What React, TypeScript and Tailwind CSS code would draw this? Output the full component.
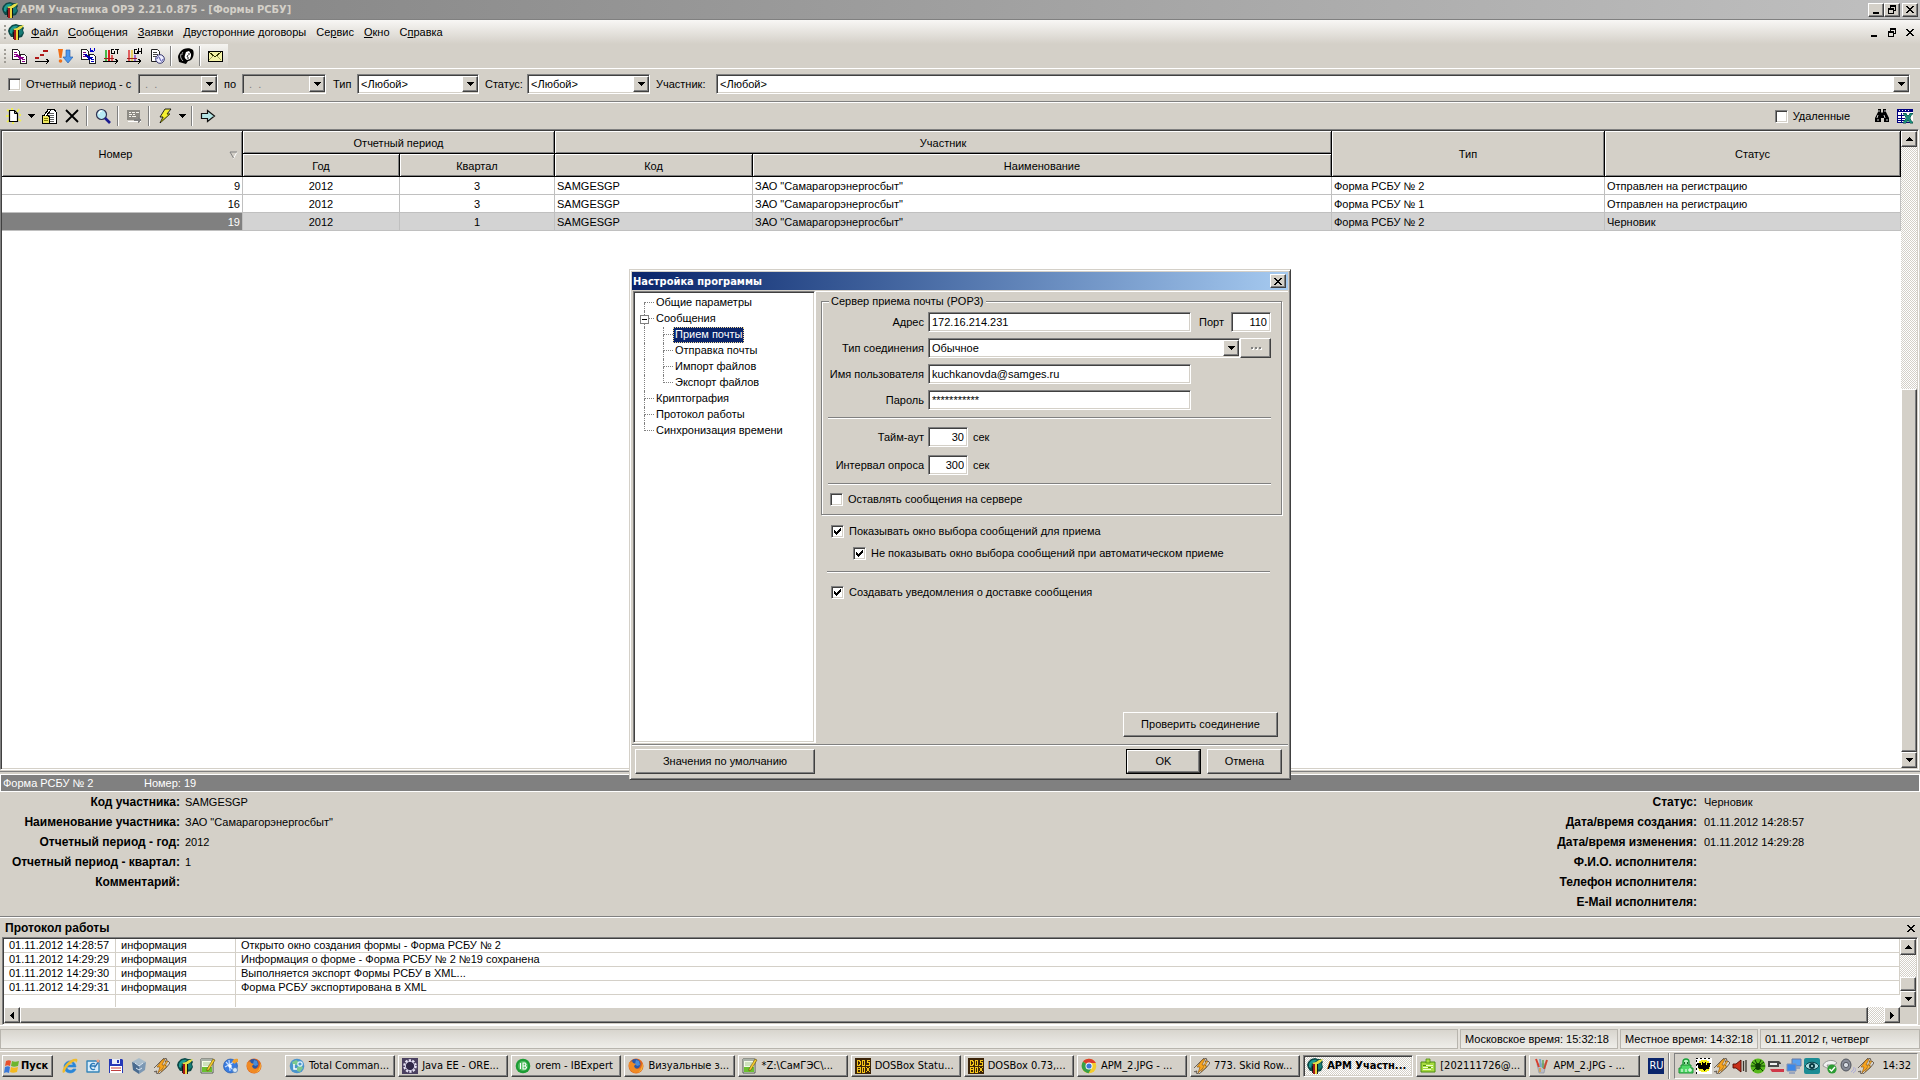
import type { ReactNode } from 'react';
import clsx from 'clsx';

const raised =
  'border border-t-white border-l-white border-r-[#404040] border-b-[#404040] shadow-[inset_-1px_-1px_0_#808080] bg-[#d4d0c8]';
const sunken =
  'border border-t-[#808080] border-l-[#808080] border-r-white border-b-white shadow-[inset_1px_1px_0_#404040,inset_-1px_-1px_0_#d4d0c8]';
const dither =
  'bg-[conic-gradient(#fff_25%,#d4d0c8_0_50%,#fff_0_75%,#d4d0c8_0)] bg-[length:2px_2px]';
const caption = "font-['DejaVu_Sans_Condensed','Noto_Sans',sans-serif] text-[11px] font-bold";

/* ---------- icons ---------- */

function Icon({ children, crisp = false }: { children: ReactNode; crisp?: boolean }) {
  return (
    <svg
      viewBox="0 0 16 16"
      className="h-4 w-4 shrink-0"
      fill="none"
      shapeRendering={crisp ? 'crispEdges' : 'auto'}
      aria-hidden="true"
    >
      {children}
    </svg>
  );
}

function Arrow({ dir }: { dir: 'up' | 'down' | 'left' | 'right' }) {
  const paths = {
    up: 'M3 0h1v1h1v1h1v1h1v1H0V3h1V2h1V1h1z',
    down: 'M0 0h7v1H6v1H5v1H4v1H3V3H2V2H1V1H0z',
    left: 'M0 3h1V2h1V1h1V0h1v7H3V6H2V5H1V4H0z',
    right: 'M0 0h1v1h1v1h1v1h1v1H3v1H2v1H1v1H0z',
  };
  const flat = dir === 'up' || dir === 'down';
  return (
    <svg
      viewBox={flat ? '0 0 7 4' : '0 0 4 7'}
      className={flat ? 'h-1 w-[7px] shrink-0' : 'h-[7px] w-1 shrink-0'}
      shapeRendering="crispEdges"
      aria-hidden="true"
    >
      <path d={paths[dir]} fill="#000" />
    </svg>
  );
}

const AppIcon = () => (
  <Icon>
    <path d="M1 4l3-3 4-1 3 1 3 0 2 3-1 2 1 3-2 4-4 1v2H6v-3L3 13 1 10 0 7z" fill="#0c4a48" />
    <path d="M2 6c1-4 5-5 8-4L7 5 5 5 4 10 2 9z" fill="#1d9a92" />
    <path d="M11 6l3-1 1 4-3 3-1-1z" fill="#167c76" />
    <path d="M5 5l4-1 3-2 4-1-2 3-3 2-3 1z" fill="#e6e04a" />
    <path d="M6 6h2v10H6z" fill="#a01818" />
    <path d="M8 6h2v10H8z" fill="#ecd43a" />
    <path d="M10.500 6v10M5.500 8v7" stroke="#111" strokeWidth=".9" />
  </Icon>
);

const DocsIcon = ({ letter }: { letter?: boolean }) => (
  <Icon crisp>
    <path d="M1 1h5l2 2v8H1z" fill="#fff" stroke="#202020" />
    <path d="M3 4h3M3 6h4M3 8h3" stroke="#800080" />
    <path d="M9 6h4l2 2v7H9z" fill="#fff" stroke="#202020" />
    <path d="M11 9h2M11 11h3M11 13h3" stroke={letter ? '#0000c0' : '#800080'} />
    <path d="M4 6h2l3 3V7l3 4-4 1v-1L5 8z" fill={letter ? '#0000b0' : '#900090'} />
    {letter && <path d="M10 0v3l1 1 1-2 1 2 1-1V0" stroke="#0000d0" />}
  </Icon>
);

const StepsIcon = () => (
  <Icon crisp>
    <path d="M9 2h5v2H9zM6 6h4v2H6zM1 9h4v2H1z" fill="#b01818" />
    <path d="M1 13h13M12 11l3 2-3 3" stroke="#000" />
  </Icon>
);

const ExchangeIcon = () => (
  <Icon>
    <path d="M1 1h5L4.500 10h-2z" fill="#f07018" />
    <circle cx="3.500" cy="13" r="1.800" fill="#f07018" />
    <path d="M9 2h4v7h3l-5 6-5-6h3z" fill="#4c98ec" stroke="#1c55a8" strokeWidth=".6" />
  </Icon>
);

const BarsIcon = ({ second }: { second?: boolean }) => (
  <Icon crisp>
    <path d="M2 2h2v11H2z" fill={second ? '#e06060' : '#48b848'} />
    <path d="M5 2h2v11H5z" fill={second ? '#e8d060' : '#d82020'} />
    <path d="M8 7h2v6H8z" fill={second ? '#a070d0' : '#e06060'} />
    <path d="M1 10h10" stroke="#a02020" />
    <path d="M0 13h14M12 11l3 2-3 3" stroke="#000" />
    {second ? (
      <path d="M11 1H8v4h3V3M12 0v6M15 0v6M12 3h3" stroke="#000" />
    ) : (
      <path d="M11 1H8v4h3V3M12 1h4M14 1v5" stroke="#000" />
    )}
  </Icon>
);

const DocWaveIcon = () => (
  <Icon>
    <path d="M2.500 1.500h6l2 2v10h-8z" fill="#fff" stroke="#202020" />
    <path d="M4 4.500h4M4 6.500h5M4 8.500h3" stroke="#303030" strokeWidth=".9" />
    <circle cx="11" cy="11" r="4.300" fill="#eef" stroke="#202060" strokeWidth=".9" />
    <path d="M8 11c1-3 2-3 3 0s2 3 3 0" stroke="#4040a0" strokeWidth=".9" />
  </Icon>
);

const HeadIcon = () => (
  <Icon>
    <path d="M3 3c2-3 9-4 12-1 1 2 1 6-1 9-2 2-4 2-4 2l-2 3-7-2-1-5C0 7 2 4 3 3z" fill="#000" />
    <path d="M8 4l3-1 2 3 0 2-1 3-3 1C7 11 6 9 7 7z" fill="#fff" />
    <path d="M10 6h2M9 10h2M10 7l-1 2" stroke="#000" strokeWidth=".9" />
    <path d="M3 6c-1 3 0 5 2 7M5 4c-1 1-1 2-1 3" stroke="#ddd" strokeWidth=".8" />
  </Icon>
);

const MailIcon = () => (
  <Icon crisp>
    <path d="M1 3h14v10H1z" fill="#f4f2a8" stroke="#000" />
    <path d="M1 13h14v1H1z" fill="#000" />
    <path d="M2 4l6 5 6-5" stroke="#303000" />
    <path d="M2 12l4-4M14 12l-4-4" stroke="#a0a060" />
  </Icon>
);

const NewIcon = () => (
  <Icon>
    <path d="M1 2l3 1M13 1l-2 3M1 14l3-2M15 13l-3-2M15 7h-2M0 8h3M6 0v2M7 16v-2" stroke="#eeee58" strokeWidth="2" />
    <path d="M3.500 2.500h5l3 3v8h-8z" fill="#fff" stroke="#000" strokeWidth="1.200" />
    <path d="M8.500 2.500v3h3" stroke="#000" />
  </Icon>
);

const EditIcon = () => (
  <Icon crisp>
    <path d="M6 1h7l2 3v11H6z" fill="#fff" stroke="#000" />
    <path d="M8 5h5M8 7h5M9 9h4M9 11h4M9 13h4" stroke="#606060" />
    <path d="M1 7h5l3 2-1 6H1z" fill="#f0e860" stroke="#000" />
    <path d="M3 7l5-6 2 1-5 6" fill="#fff" stroke="#000" />
    <path d="M3 10h4M3 12h4" stroke="#808000" />
  </Icon>
);

const DeleteIcon = () => (
  <Icon>
    <path d="M2 2l12 12M14 2L2 14" stroke="#000" strokeWidth="1.800" />
  </Icon>
);

const SearchIcon = () => (
  <Icon>
    <circle cx="6.500" cy="6.500" r="5" fill="#b8eaf4" stroke="#303050" strokeWidth="1.200" />
    <path d="M4 6c0-2 1-3 3-3" stroke="#fff" strokeWidth="1.200" />
    <path d="M10 10l5 5" stroke="#1c1c90" strokeWidth="2.600" />
  </Icon>
);

const SendOffIcon = () => (
  <Icon crisp>
    <path d="M1 2h13v10H1z" fill="#8c8a84" />
    <path d="M3 4h2M6 4h3M10 4h3M3 6h3M7 6h2M3 8h2M6 8h4" stroke="#f4f2ec" />
    <path d="M15 4v9H2v1h13z" fill="#fff" />
    <path d="M8 11h4V9l4 3-4 3v-2H8z" fill="#808080" />
  </Icon>
);

const BoltIcon = () => (
  <Icon>
    <path d="M8 1h6l-4 5h3L3 15l3-6H3z" fill="#f4f030" stroke="#101010" strokeWidth=".9" />
    <path d="M10 6l3 0L4 14l3-5" stroke="#808000" strokeWidth=".6" />
  </Icon>
);

const GoIcon = () => (
  <Icon>
    <path d="M1.500 5.500h6v-3l7 5.500-7 5.500v-3h-6z" fill="#b4e4e4" stroke="#101010" strokeWidth="1.200" />
  </Icon>
);

const BinocularsIcon = () => (
  <Icon>
    <path d="M4 1h3v3l1 1 1-1V1h3v3l3 6v4h-5v-4H7v4H1v-4l3-6z" fill="#000" />
    <path d="M5 2v2M11 2v2M3 10l1-3M10 7l1 3M3 12h2M12 12h2" stroke="#fff" strokeWidth=".8" />
  </Icon>
);

const ExcelIcon = () => (
  <Icon crisp>
    <path d="M0 1h16v13H0z" fill="#fff" stroke="#000080" />
    <path d="M0 1h16v3H0z" fill="#000080" />
    <path d="M2 2h1M5 2h1M8 2h1M11 2h1" stroke="#fff" />
    <path d="M1 7h7M1 10h7M1 12h7M4 5v9" stroke="#000080" />
    <path d="M6 5h3l2 3 2-3h3l-3 5 3 5h-3l-2-3-2 3H6l3-5z" fill="#1a8c78" stroke="#06443a" strokeWidth=".5" />
  </Icon>
);

const StartIcon = () => (
  <Icon>
    <path d="M2 3c2-1 4-1 5 0L6 8C4 7 3 7 1 8z" fill="#e8502c" />
    <path d="M8 3c2 1 4 1 7 0l-1 5c-3 1-5 1-7 0z" fill="#6cb52d" />
    <path d="M1 9c2-1 4-1 5 0l-1 6c-2-1-3-1-5 0z" fill="#3a78d8" />
    <path d="M7 9c2 1 4 1 7 0l-1 5c-3 1-5 1-7 0z" fill="#f4b91e" />
  </Icon>
);

const IeIcon = () => (
  <Icon>
    <path d="M14 9H5c0 4 5 4 6 2h3c-2 6-12 5-12-2S13 0 14 9zM5 7h6c0-3-5-3-6 0z" fill="#2a86d8" stroke="#2a86d8" strokeWidth=".6" />
    <path d="M1 15C-2 11 9-1 15 1c1 1 0 3-1 4 0-2-1-2-3-1C7 6 3 11 3 14z" fill="#f0bc2c" />
  </Icon>
);

const DesktopIcon = () => (
  <Icon>
    <path d="M2 3h9l3 2v9H2z" fill="#d8ecfa" stroke="#3584b8" strokeWidth="1.400" strokeLinejoin="round" />
    <path d="M10 6a3 3 0 1 0 0 5M6 8h4" stroke="#2a7ab8" strokeWidth="1.300" />
    <path d="M9 9l5-7 1 1-5 7z" fill="#2a70b0" />
    <circle cx="13" cy="3" r="1.500" fill="#f0a080" />
  </Icon>
);

const FloppyIcon = () => (
  <Icon>
    <path d="M1 1h13l1 1v13H1z" fill="#2438b8" />
    <path d="M4 1h8v5H4z" fill="#e8ecf8" />
    <path d="M9 2h2v3H9z" fill="#2438b8" />
    <path d="M2 8h12v7H2z" fill="#fff" />
    <path d="M3 10h10M3 12.500h10" stroke="#c04040" />
  </Icon>
);

const CubeIcon = () => (
  <Icon>
    <path d="M8 0l7 4-7 3-7-3z" fill="#a8bccb" />
    <path d="M1 4l7 3v9l-6-4z" fill="#4a6c90" />
    <path d="M15 4L8 7v9l6-4z" fill="#7c98b4" />
    <path d="M4 5l4 3 4-3M5 10l3 2 3-2" stroke="#dce8f4" />
  </Icon>
);

const WinampIcon = () => (
  <Icon>
    <path d="M7 3l3-3 3 1-2 3 3-1 2 2-4 5-7 6-3-1 1-2-4 1-1-2 5-5z" fill="#d8d4cc" stroke="#4c443c" strokeWidth=".8" />
    <path d="M8 2l3-1-3 6h4l-8 8 2-6H3z" fill="#f8a41c" stroke="#8c5408" strokeWidth=".6" />
    <path d="M12 3l2 0-3 5h2l-6 6 2-4z" fill="#fbb83c" stroke="#8c5408" strokeWidth=".5" />
  </Icon>
);

const NotepadIcon = () => (
  <Icon>
    <path d="M1 1h12v14H1z" fill="#f4fbe8" stroke="#505850" />
    <path d="M1 1h12v2H1z" fill="#a8b0a8" />
    <path d="M2 9h10v5H2z" fill="#6cc030" />
    <path d="M3 5h7M3 7h6" stroke="#a8c890" />
    <path d="M7 11l6-10 2 1-6 10-2 1z" fill="#f4cc2c" stroke="#604808" strokeWidth=".6" />
  </Icon>
);

const DiscIcon = () => (
  <Icon>
    <circle cx="7.500" cy="8" r="7" fill="#3a7ce0" stroke="#2050a0" strokeWidth=".6" />
    <path d="M3 4l8 9M2 9l9-5M6 2l1 11" stroke="#c8e0ff" strokeWidth="1.200" />
    <circle cx="7" cy="8" r="1.800" fill="#fff" />
    <path d="M9 4c1-3 4-4 6-3v3c-2 0-3 1-3 2z" fill="#f0a02c" />
    <circle cx="12" cy="12" r="2.500" fill="#d8e8f8" stroke="#4878b8" strokeWidth=".8" />
  </Icon>
);

const FirefoxIcon = () => (
  <Icon>
    <circle cx="8" cy="8" r="7.500" fill="#e0631c" />
    <circle cx="7.500" cy="6" r="5" fill="#2a58a8" />
    <path d="M8 2l3 1 1 4-3 1-2-2z" fill="#4c8cd8" />
    <path d="M1 4c1 1 2 0 3-1l1 2 3 1-2 2c1 4 6 4 8 0 0 4-3 7-7 7C2 14 0 9 1 4z" fill="#f08a24" />
    <path d="M14 5c2 4 0 9-5 10 4-2 5-5 5-10z" fill="#f8c040" />
  </Icon>
);

const TotalIcon = () => (
  <Icon>
    <circle cx="8" cy="8" r="7.300" fill="#4a94cc" />
    <path d="M3 4l4-2 3 2-2 3H4zM8 9l4-2 2 3-3 4-3-1z" fill="#7cc890" />
    <path d="M5 6v5h3" stroke="#fff" strokeWidth="1.500" />
    <circle cx="11" cy="6" r="2.200" stroke="#e0f2ff" strokeWidth="1.200" />
  </Icon>
);

const EclipseIcon = () => (
  <Icon>
    <path d="M0 0h16v16H0z" fill="#4a4060" />
    <circle cx="8" cy="8" r="5.600" stroke="#e8e4f4" strokeWidth="2.400" strokeDasharray="2.200 1.300" />
    <circle cx="8" cy="8" r="4.600" fill="#302848" stroke="#d4d0e8" />
  </Icon>
);

const IbIcon = () => (
  <Icon>
    <circle cx="8" cy="8" r="7.300" fill="#1c9c34" />
    <circle cx="8" cy="8" r="5" fill="#50bc60" />
    <path d="M5.500 5v6M8 5v6h2.500l1-1.500-1-1.500H8h2l1-1.500-1-1.500z" stroke="#fff" strokeWidth="1.100" />
  </Icon>
);

const DosIcon = () => (
  <Icon crisp>
    <path d="M0 0h16v16H0z" fill="#3c2408" />
    <path
      d="M2 2h2v1h1v3H4v1H2zM7 2h2v5H7zM12 2h3M12 2v2h2v3h-3M2 9h3v5H2zM2 11h3M7 9h2v5H7zM11 9l4 5M15 9l-4 5"
      stroke="#f4c418"
    />
  </Icon>
);

const ChromeIcon = () => (
  <Icon>
    <circle cx="8" cy="8" r="7.300" fill="#f4cc2c" />
    <path d="M8 8L2 3.500C5-.5 12-.5 15 5H8z" fill="#dc3c2c" />
    <path d="M2 3.500C-1 8 1 14 7.500 15.300L11 9.500 8 8z" fill="#38a048" />
    <circle cx="8" cy="8" r="3.500" fill="#fff" />
    <circle cx="8" cy="8" r="2.600" fill="#3c78d8" />
  </Icon>
);

const NoteIcon = () => (
  <Icon>
    <path d="M1 4h14v10H1z" fill="#a8dc40" stroke="#4c8c10" />
    <path d="M3 7.500h10M3 9.500h10M3 11.500h8" stroke="#f0ffd0" />
    <path d="M3 7.500h3M8 9.500h3" stroke="#4c8c10" />
    <path d="M6 1h4v4H6z" fill="#a8dc40" stroke="#4c8c10" strokeWidth=".8" />
  </Icon>
);

const PencilsIcon = () => (
  <Icon>
    <path d="M4 6h9l-2 9H6z" fill="#b8bcc8" stroke="#888c98" strokeWidth=".6" />
    <path d="M3 1l3 8" stroke="#d83c2c" strokeWidth="2" />
    <path d="M7 1l1 8" stroke="#78a8c8" strokeWidth="2" />
    <path d="M14 2l-3 9" stroke="#c84830" strokeWidth="2" />
    <path d="M10 2v8" stroke="#5ca050" strokeWidth="1.400" />
    <path d="M7 10v4" stroke="#d8a040" strokeWidth="1.600" />
  </Icon>
);

const QipIcon = () => (
  <Icon>
    <path d="M5 8V4c0-4 6-4 6 0v4" fill="#b8f4c0" stroke="#18a038" strokeWidth="1.400" />
    <path d="M3 7h10v3h2v5H1v-5h2z" fill="#50d868" stroke="#189030" />
    <path d="M6.500 4v2M9.500 4v2" stroke="#106820" strokeWidth="1.200" />
    <path d="M4 11v3M8 11v3M11 11h2v2h-2z" stroke="#fff" />
  </Icon>
);

const BatIcon = () => (
  <Icon crisp>
    <path d="M0 0h16v16H0z" fill="#fff" stroke="#000" strokeDasharray="2 2" />
    <circle cx="8" cy="8" r="6.500" fill="#f4f01c" />
    <path d="M1 5h4v2h1V4h1v1h2V4h1v3h1V5h4l-2 6h-3l-2 2-2-2H3z" fill="#000" />
  </Icon>
);

const SpeakerIcon = () => (
  <Icon>
    <path d="M1 6h3l5-4v12l-5-4H1z" fill="#c83018" stroke="#500c04" strokeWidth=".9" />
    <path d="M11.500 3v10M14 2v12" stroke="#38342c" strokeWidth="1.300" />
  </Icon>
);

const SpiderIcon = () => (
  <Icon>
    <circle cx="8" cy="8" r="7.500" fill="#58b81c" />
    <path d="M2 4l4 3M14 4l-4 3M1 8h14M3 13l4-4M13 13L9 9M5 2l2 4M11 2L9 6" stroke="#0c3c04" />
    <ellipse cx="8" cy="8.500" rx="2.600" ry="3.600" fill="#0c3c04" />
  </Icon>
);

const DriveIcon = () => (
  <Icon>
    <path d="M0 3h11l2 2v4H0z" fill="#484848" />
    <path d="M2 5h7v2H2z" fill="#f0f0f0" />
    <path d="M2 11h14v3H4z" fill="#d03848" />
    <path d="M11 6h5v3h-5z" fill="#c8c8c8" />
  </Icon>
);

const NetworkIcon = () => (
  <Icon>
    <path d="M6 1h9v7H6z" fill="#58a0f0" stroke="#6878a0" />
    <path d="M1 6h9v7H1z" fill="#3c88e8" stroke="#8090b0" />
    <path d="M3 15h6M10 10h4" stroke="#8898b8" strokeWidth="1.400" />
  </Icon>
);

const EyeIcon = () => (
  <Icon>
    <rect width="16" height="16" rx="2" fill="#1c8c94" />
    <path d="M1 8c3-5 11-5 14 0-3 5-11 5-14 0z" fill="#a8dce0" stroke="#084048" />
    <circle cx="8" cy="8" r="3" fill="#083840" />
    <circle cx="8" cy="8" r="1" fill="#c8f0f0" />
  </Icon>
);

const SafeIcon = () => (
  <Icon>
    <path d="M1 8c0-5 10-8 14-3l-3 2H5l2 4z" fill="#f0f0f0" stroke="#888" strokeWidth=".8" />
    <circle cx="10" cy="11" r="4.600" fill="#2c9c34" />
    <path d="M7.500 11l2 2 3.500-4" stroke="#fff" strokeWidth="1.400" />
  </Icon>
);

const VolumeIcon = () => (
  <Icon>
    <ellipse cx="6" cy="7" rx="5" ry="6" fill="#888c98" stroke="#50545c" />
    <circle cx="6" cy="7" r="2.600" fill="#d8dce4" stroke="#40444c" strokeWidth=".8" />
    <path d="M11 14c2-1 3-3 3-5M13 15c2-1 3-3 3-5" stroke="#a8a8d8" />
  </Icon>
);

/* ---------- controls ---------- */

function MinGlyph() {
  return (
    <svg viewBox="0 0 9 9" className="h-[9px] w-[9px]" shapeRendering="crispEdges" aria-hidden="true">
      <path d="M1 7h6v2H1z" />
    </svg>
  );
}

function RestoreGlyph() {
  return (
    <svg viewBox="0 0 9 9" className="h-[9px] w-[9px]" shapeRendering="crispEdges" aria-hidden="true">
      <path d="M2 0h6v6H6V5h1V2H3v1H2zM0 3h6v6H0zm1 2v3h4V5z" fillRule="evenodd" />
    </svg>
  );
}

function CloseGlyph() {
  return (
    <svg viewBox="0 0 8 7" className="h-[7px] w-2" shapeRendering="crispEdges" aria-hidden="true">
      <path d="M0 0h2v1h1v1h2V1h1V0h2v1H7v1H6v1H5v1h1v1h1v1h1v1H6V6H5V5H3v1H2v1H0V6h1V5h1V4h1V3H2V2H1V1H0z" />
    </svg>
  );
}

function WinButton({ label, children }: { label: string; children: ReactNode }) {
  return (
    <button type="button" aria-label={label} className={clsx(raised, 'flex h-3.5 w-4 items-center justify-center')}>
      {children}
    </button>
  );
}

function ScrollButton({ dir }: { dir: 'up' | 'down' | 'left' | 'right' }) {
  return (
    <button
      type="button"
      aria-label={dir}
      className={clsx(raised, 'flex h-4 w-4 shrink-0 items-center justify-center')}
    >
      <Arrow dir={dir} />
    </button>
  );
}

function Check({ label, checked = false, className }: { label: string; checked?: boolean; className?: string }) {
  return (
    <label className={clsx('flex items-center gap-[5px] whitespace-nowrap', className)}>
      <span className="grid h-[13px] w-[13px] shrink-0">
        <input
          type="checkbox"
          defaultChecked={checked}
          className={clsx(sunken, 'peer col-start-1 row-start-1 h-[13px] w-[13px] appearance-none bg-white')}
        />
        <svg
          viewBox="0 0 13 13"
          className="pointer-events-none invisible col-start-1 row-start-1 h-[13px] w-[13px] peer-checked:visible"
          shapeRendering="crispEdges"
          aria-hidden="true"
        >
          <path d="M3 5h1v1h1v1h1V6h1V5h1V4h1V3h1v3H9v1H8v1H7v1H6v1H5V9H4V8H3z" />
        </svg>
      </span>
      {label}
    </label>
  );
}

function Combo({
  id,
  value,
  label,
  disabled = false,
  className,
}: {
  id: string;
  value: string;
  label?: string;
  disabled?: boolean;
  className?: string;
}) {
  return (
    <span className={clsx(sunken, 'relative flex h-5', disabled ? 'bg-[#d4d0c8]' : 'bg-white', className)}>
      <select
        id={id}
        aria-label={label}
        disabled={disabled}
        className="w-full appearance-none pl-[3px] outline-none disabled:text-[#808080] disabled:opacity-100"
      >
        <option>{value}</option>
      </select>
      <span
        className={clsx(
          raised,
          'pointer-events-none absolute top-px right-0 bottom-px flex w-4 items-center justify-center'
        )}
      >
        <Arrow dir="down" />
      </span>
    </span>
  );
}

const Grip = () => (
  <span className="ml-1 flex w-0.5 flex-col gap-0.5" aria-hidden="true">
    {[0, 1, 2, 3].map((i) => (
      <span key={i} className="h-0.5 w-0.5 bg-[#a09d96]" />
    ))}
  </span>
);

const Sep = ({ wide }: { wide?: boolean }) => (
  <span className={clsx('h-5 w-0.5 border-r border-l border-r-white border-l-[#808080]', wide ? 'mx-[3px]' : 'mx-0.5')} />
);

function ToolButton({ label, children }: { label: string; children: ReactNode }) {
  return (
    <button type="button" aria-label={label} className="flex h-[22px] w-[23px] items-center justify-center">
      {children}
    </button>
  );
}

/* ---------- main window ---------- */

const menu = [
  ['', 'Ф', 'айл'],
  ['', 'С', 'ообщения'],
  ['', 'З', 'аявки'],
  ['', 'Д', 'вусторонние договоры'],
  ['Се', 'р', 'вис'],
  ['', 'О', 'кно'],
  ['С', 'п', 'равка'],
];

const forms = [
  { num: 9, year: 2012, quarter: 3, type: 'Форма РСБУ № 2', status: 'Отправлен на регистрацию' },
  { num: 16, year: 2012, quarter: 3, type: 'Форма РСБУ № 1', status: 'Отправлен на регистрацию' },
  { num: 19, year: 2012, quarter: 1, type: 'Форма РСБУ № 2', status: 'Черновик', selected: true },
];

const log = [
  ['01.11.2012 14:28:57', 'Открыто окно создания формы - Форма РСБУ № 2'],
  ['01.11.2012 14:29:29', 'Информация о форме - Форма РСБУ № 2 №19 сохранена'],
  ['01.11.2012 14:29:30', 'Выполняется экспорт Формы РСБУ в XML...'],
  ['01.11.2012 14:29:31', 'Форма РСБУ экспортирована в XML'],
];

function TitleBar() {
  return (
    <header className="flex h-5 items-center gap-0.5 border-b border-[#808080] bg-linear-to-r from-[#808080] to-[#c0c0c0] pr-0.5 pl-0.5">
      <AppIcon />
      <h1 className={clsx(caption, 'flex-1 text-[#d4d0c8]')}>АРМ Участника ОРЭ 2.21.0.875 - [Формы РСБУ]</h1>
      <span className="flex">
        <WinButton label="Свернуть">
          <MinGlyph />
        </WinButton>
        <WinButton label="Восстановить">
          <RestoreGlyph />
        </WinButton>
        <span className="ml-0.5 flex">
          <WinButton label="Закрыть">
            <CloseGlyph />
          </WinButton>
        </span>
      </span>
    </header>
  );
}

function MenuBar() {
  return (
    <nav className="flex h-6 items-center bg-linear-to-b from-[#f8f7f5] to-[#d4d0c8]">
      <Grip />
      <span className="ml-0.5 flex">
        <AppIcon />
      </span>
      <span className="ml-0.5 flex flex-1">
        {menu.map(([before, key, after]) => (
          <button key={before + key + after} type="button" className="px-[5px]">
            {before}
            <u className="underline-offset-1">{key}</u>
            {after}
          </button>
        ))}
      </span>
      <span className="flex w-[50px] items-center justify-between pr-1.5">
        <button type="button" aria-label="Свернуть форму">
          <MinGlyph />
        </button>
        <button type="button" aria-label="Восстановить форму">
          <RestoreGlyph />
        </button>
        <button type="button" aria-label="Закрыть форму">
          <CloseGlyph />
        </button>
      </span>
    </nav>
  );
}

function MainToolbar() {
  return (
    <div className="flex h-[25px] border-b border-white">
      <div className="flex items-center bg-linear-to-b from-[#f5f4f1] to-[#d4d0c8] pr-0.5">
        <Grip />
        <span className="ml-px flex items-center">
          <ToolButton label="Акты">
            <DocsIcon />
          </ToolButton>
          <ToolButton label="Ступени">
            <StepsIcon />
          </ToolButton>
          <ToolButton label="Обмен">
            <ExchangeIcon />
          </ToolButton>
          <ToolButton label="Договоры">
            <DocsIcon letter />
          </ToolButton>
          <ToolButton label="График ГТ">
            <BarsIcon />
          </ToolButton>
          <ToolButton label="График ГН">
            <BarsIcon second />
          </ToolButton>
          <ToolButton label="Отчет">
            <DocWaveIcon />
          </ToolButton>
          <Sep />
          <ToolButton label="Персоны">
            <HeadIcon />
          </ToolButton>
          <Sep />
          <ToolButton label="Почта">
            <MailIcon />
          </ToolButton>
        </span>
      </div>
    </div>
  );
}

function FilterBar() {
  return (
    <div className="flex h-[33px] items-center border-b border-[#808080] pr-2.5 pb-0.5 pl-2">
      <Check label="Отчетный период - с" className="w-[130px]" />
      <Combo id="from" label="Период с" value={'\u00a0.\u00a0\u00a0.'} disabled className="w-20" />
      <label htmlFor="to" className="w-6 pl-1.5">
        по
      </label>
      <Combo id="to" label="Период по" value={'\u00a0.\u00a0\u00a0.'} disabled className="w-[84px]" />
      <label htmlFor="kind" className="w-[31px] pl-[7px]">
        Тип
      </label>
      <Combo id="kind" value="<Любой>" className="w-[122px]" />
      <label htmlFor="status" className="w-12 pl-1.5">
        Статус:
      </label>
      <Combo id="status" value="<Любой>" className="w-[123px]" />
      <label htmlFor="member" className="w-[66px] pl-1.5">
        Участник:
      </label>
      <Combo id="member" value="<Любой>" className="flex-1" />
    </div>
  );
}

function FormToolbar() {
  return (
    <div className="flex h-[27px] items-center border-t border-white pr-1 pl-0.5">
      <ToolButton label="Создать">
        <NewIcon />
      </ToolButton>
      <button type="button" aria-label="Создать, меню" className="flex w-3 justify-center">
        <Arrow dir="down" />
      </button>
      <ToolButton label="Изменить">
        <EditIcon />
      </ToolButton>
      <ToolButton label="Удалить">
        <DeleteIcon />
      </ToolButton>
      <Sep wide />
      <ToolButton label="Просмотр">
        <SearchIcon />
      </ToolButton>
      <Sep wide />
      <ToolButton label="Отправить">
        <SendOffIcon />
      </ToolButton>
      <Sep wide />
      <ToolButton label="Действия">
        <BoltIcon />
      </ToolButton>
      <button type="button" aria-label="Действия, меню" className="flex w-3 justify-center">
        <Arrow dir="down" />
      </button>
      <Sep wide />
      <ToolButton label="Перейти">
        <GoIcon />
      </ToolButton>
      <span className="flex-1" />
      <Check label="Удаленные" className="mr-5" />
      <ToolButton label="Найти">
        <BinocularsIcon />
      </ToolButton>
      <ToolButton label="Выгрузить в Excel">
        <ExcelIcon />
      </ToolButton>
    </div>
  );
}

const th =
  'border-r border-b border-black bg-[#d4d0c8] px-0 pt-0.5 pb-0 text-center font-normal shadow-[inset_1px_1px_0_#fff,inset_-1px_-1px_0_#808080]';
const td = 'border-r border-b border-[#c0c0c0] px-0.5 pt-px pb-0';

function FormsGrid() {
  return (
    <section className={clsx(sunken, 'mr-px flex min-h-0 flex-1 bg-white p-px')}>
      <div className="min-w-0 flex-1">
        <table className="w-full table-fixed border-separate border-spacing-0">
          <colgroup>
            <col className="w-[241px]" />
            <col className="w-[157px]" />
            <col className="w-[155px]" />
            <col className="w-[198px]" />
            <col />
            <col className="w-[273px]" />
            <col className="w-[296px]" />
          </colgroup>
          <thead>
            <tr className="h-[23px]">
              <th rowSpan={2} className={th}>
                <span className="flex items-center pr-1">
                  <span className="flex-1">Номер</span>
                  <svg viewBox="0 0 9 8" className="h-2 w-[9px]" fill="none" aria-hidden="true">
                    <path d="M8 1L4.500 7.500" stroke="#fff" />
                    <path d="M4.500 7L1 1h7" stroke="#808080" />
                  </svg>
                </span>
              </th>
              <th colSpan={2} className={th}>
                Отчетный период
              </th>
              <th colSpan={2} className={th}>
                Участник
              </th>
              <th rowSpan={2} className={th}>
                Тип
              </th>
              <th rowSpan={2} className={th}>
                Статус
              </th>
            </tr>
            <tr className="h-[23px]">
              <th className={th}>Год</th>
              <th className={th}>Квартал</th>
              <th className={th}>Код</th>
              <th className={th}>Наименование</th>
            </tr>
          </thead>
          <tbody>
            {forms.map((f) => (
              <tr key={f.num} className={clsx('h-[18px]', f.selected && 'bg-[#d3d3d3]')}>
                <td className={clsx(td, 'text-right', f.selected && 'bg-[#808080] text-white')}>{f.num}</td>
                <td className={clsx(td, 'text-center')}>{f.year}</td>
                <td className={clsx(td, 'text-center')}>{f.quarter}</td>
                <td className={td}>SAMGESGP</td>
                <td className={td}>ЗАО "Самарагорэнергосбыт"</td>
                <td className={td}>{f.type}</td>
                <td className={td}>{f.status}</td>
              </tr>
            ))}
          </tbody>
        </table>
      </div>
      <div className={clsx(dither, 'flex w-4 flex-col')}>
        <ScrollButton dir="up" />
        <span className="flex-[243]" />
        <span className={clsx(raised, 'flex-[362]')} />
        <ScrollButton dir="down" />
      </div>
    </section>
  );
}

function Details() {
  const left = [
    ['Код участника:', 'SAMGESGP'],
    ['Наименование участника:', 'ЗАО "Самарагорэнергосбыт"'],
    ['Отчетный период - год:', '2012'],
    ['Отчетный период - квартал:', '1'],
    ['Комментарий:', ''],
  ];
  const right = [
    ['Статус:', 'Черновик'],
    ['Дата/время создания:', '01.11.2012 14:28:57'],
    ['Дата/время изменения:', '01.11.2012 14:29:28'],
    ['Ф.И.О. исполнителя:', ''],
    ['Телефон исполнителя:', ''],
    ['E-Mail исполнителя:', ''],
  ];
  return (
    <section className="mt-px h-[146px] border-t border-b border-[#808080]">
      <div className="mt-0.5 flex h-[18px] items-center border border-white bg-[#808080] pl-0.5 text-white">
        <span className="w-[141px]">Форма РСБУ № 2</span>
        <span>Номер: 19</span>
      </div>
      <div className="flex justify-between">
        <dl className="grid auto-rows-[20px] grid-cols-[180px_auto] items-center gap-x-[5px]">
          {left.map(([k, v]) => (
            <div key={k} className="contents">
              <dt className="text-right text-[12px] font-bold whitespace-nowrap">{k}</dt>
              <dd>{v}</dd>
            </div>
          ))}
        </dl>
        <dl className="grid auto-rows-[20px] grid-cols-[180px_216px] items-center gap-x-[7px]">
          {right.map(([k, v]) => (
            <div key={k} className="contents">
              <dt className="text-right text-[12px] font-bold whitespace-nowrap">{k}</dt>
              <dd>{v}</dd>
            </div>
          ))}
        </dl>
      </div>
    </section>
  );
}

function LogPanel() {
  const cell = 'border-r border-b border-[#d4d0c8] px-[5px] py-0 whitespace-nowrap';
  return (
    <section className="border-t border-b border-white px-0.5">
      <div className="flex h-[19px] items-center justify-between px-[3px] pt-px">
        <h2 className="text-[12px] font-bold">Протокол работы</h2>
        <button type="button" aria-label="Закрыть протокол">
          <CloseGlyph />
        </button>
      </div>
      <div className={clsx(sunken, 'p-px')}>
        <div className="flex h-[68px] overflow-hidden">
          <div className="flex-1 bg-white">
            <table className="w-full table-fixed border-separate border-spacing-0">
              <colgroup>
                <col className="w-[112px]" />
                <col className="w-[120px]" />
                <col />
              </colgroup>
              <tbody>
                {log.map(([time, text]) => (
                  <tr key={time} className="h-3.5">
                    <td className={cell}>{time}</td>
                    <td className={cell}>информация</td>
                    <td className={cell}>{text}</td>
                  </tr>
                ))}
                <tr className="h-3">
                  <td className="border-r border-[#d4d0c8] p-0" />
                  <td className="border-r border-[#d4d0c8] p-0" />
                  <td className="p-0" />
                </tr>
              </tbody>
            </table>
          </div>
          <div className={clsx(dither, 'flex w-4 flex-col')}>
            <ScrollButton dir="up" />
            <span className="flex-1" />
            <span className={clsx(raised, 'h-3.5')} />
            <ScrollButton dir="down" />
          </div>
        </div>
        <div className="flex h-4 pr-4">
          <div className={clsx(dither, 'flex flex-1')}>
            <ScrollButton dir="left" />
            <span className={clsx(raised, 'flex-1')} />
            <span className="w-4" />
            <ScrollButton dir="right" />
          </div>
        </div>
      </div>
    </section>
  );
}

function StatusBar() {
  const pane = 'flex items-center border border-[#b8b5ae] bg-linear-to-b from-[#d8d5ce] to-[#efeeea] pt-px pl-1';
  return (
    <footer className="flex h-6 gap-0.5 bg-[#e4e1db] pt-[3px] pb-px">
      <div className={clsx(pane, 'flex-1')} />
      <div className={clsx(pane, 'w-[158px]')}>Московское время: 15:32:18</div>
      <div className={clsx(pane, 'w-[138px]')}>Местное время: 14:32:18</div>
      <div className={clsx(pane, 'w-40')}>01.11.2012 г, четверг</div>
    </footer>
  );
}

/* ---------- settings dialog ---------- */

const tree: { text: string; sub?: boolean; box?: boolean; active?: boolean }[] = [
  { text: 'Общие параметры' },
  { text: 'Сообщения', box: true },
  { text: 'Прием почты', sub: true, active: true },
  { text: 'Отправка почты', sub: true },
  { text: 'Импорт файлов', sub: true },
  { text: 'Экспорт файлов', sub: true },
  { text: 'Криптография' },
  { text: 'Протокол работы' },
  { text: 'Синхронизация времени' },
];

function Branch({ first, last }: { first?: boolean; last?: boolean }) {
  return (
    <span className="flex h-4 w-[10px] flex-col">
      <span className={clsx('h-2 border-b border-dotted border-[#808080]', !first && 'border-l')} />
      <span className={clsx('h-2 border-dotted border-[#808080]', !last && 'border-l')} />
    </span>
  );
}

function SettingsTree() {
  return (
    <ul className={clsx(sunken, 'w-[182px] shrink-0 bg-white pt-[3px] pl-2.5')}>
      {tree.map((node, i) => (
        <li key={node.text} className="relative flex h-4 items-center">
          {node.sub ? (
            <>
              <span className="h-4 w-[19px] border-l border-dotted border-[#808080]" />
              <Branch last={!tree[i + 1].sub} />
            </>
          ) : (
            <Branch first={i === 0} last={i === tree.length - 1} />
          )}
          {node.box && (
            <button
              type="button"
              aria-label="Свернуть ветку"
              className="absolute top-1 -left-1 flex h-[9px] w-[9px] items-center border border-[#808080] bg-white px-px"
            >
              <span className="h-px w-full bg-black" />
            </button>
          )}
          <a
            href="#settings"
            className={clsx(
              'h-4 px-0.5 leading-[15px]',
              node.active && 'bg-[#0a246a] text-white outline-1 -outline-offset-1 outline-[#f5db95] outline-dotted'
            )}
          >
            {node.text}
          </a>
        </li>
      ))}
    </ul>
  );
}

const field = clsx(sunken, 'h-5 min-w-0 bg-white px-[3px] pb-px outline-none');
const fieldLabel = 'mr-1 w-[102px] shrink-0 text-right whitespace-nowrap';

const Rule = () => <hr className="h-0.5 border-t border-b border-t-[#808080] border-b-white" />;

function ServerBox() {
  return (
    <fieldset className="min-w-0 border border-[#808080] pb-2 shadow-[1px_1px_0_#fff,inset_1px_1px_0_#fff]">
      <legend className="ml-[7px] bg-[#d4d0c8] px-0.5">Сервер приема почты (POP3)</legend>
      <div className="flex flex-col gap-1.5 pt-1 pr-2.5">
        <div className="flex items-center">
          <label htmlFor="host" className={fieldLabel}>
            Адрес
          </label>
          <input id="host" defaultValue="172.16.214.231" className={clsx(field, 'flex-1')} />
          <span className="flex w-20 items-center justify-between pl-2">
            <label htmlFor="port">Порт</label>
            <input id="port" defaultValue="110" className={clsx(field, 'w-10 text-right')} />
          </span>
        </div>
        <div className="flex items-center">
          <label htmlFor="conn" className={fieldLabel}>
            Тип соединения
          </label>
          <Combo id="conn" value="Обычное" className="flex-1" />
          <button
            type="button"
            disabled
            aria-label="Параметры соединения"
            className={clsx(raised, 'flex h-5 w-[31px] items-center justify-center gap-0.5')}
          >
            {[0, 1, 2].map((i) => (
              <span key={i} className="h-0.5 w-0.5 bg-[#808080] shadow-[1px_1px_0_#fff]" />
            ))}
          </button>
        </div>
        <div className="flex items-center pr-20">
          <label htmlFor="user" className={fieldLabel}>
            Имя пользователя
          </label>
          <input id="user" defaultValue="kuchkanovda@samges.ru" className={clsx(field, 'flex-1')} />
        </div>
        <div className="flex items-center pr-20">
          <label htmlFor="pass" className={fieldLabel}>
            Пароль
          </label>
          <input id="pass" autoComplete="off" defaultValue="***********" className={clsx(field, 'flex-1')} />
        </div>
      </div>
      <div className="flex flex-col gap-2 pt-[7px] pr-2.5 pl-1.5">
        <Rule />
        <div className="-ml-1.5 flex items-center">
          <label htmlFor="timeout" className={fieldLabel}>
            Тайм-аут
          </label>
          <input id="timeout" defaultValue="30" className={clsx(field, 'w-10 text-right')} />
          <span className="ml-[5px]">сек</span>
        </div>
        <div className="-ml-1.5 flex items-center">
          <label htmlFor="interval" className={fieldLabel}>
            Интервал опроса
          </label>
          <input id="interval" defaultValue="300" className={clsx(field, 'w-10 text-right')} />
          <span className="ml-[5px]">сек</span>
        </div>
        <Rule />
        <Check label="Оставлять сообщения на сервере" className="pl-0.5" />
      </div>
    </fieldset>
  );
}

function SettingsDialog() {
  return (
    <div
      role="dialog"
      aria-labelledby="settings"
      className="w-[662px] border border-[#d4d0c8] border-r-[#404040] border-b-[#404040] bg-[#d4d0c8] p-0.5 shadow-[inset_1px_1px_0_#fff,inset_-1px_-1px_0_#808080]"
    >
      <div className="flex h-[18px] items-center justify-between bg-linear-to-r from-[#0a246a] to-[#a6caf0] pr-0.5 pl-px">
        <h2 id="settings" className={clsx(caption, 'text-white')}>
          Настройка программы
        </h2>
        <WinButton label="Закрыть окно">
          <CloseGlyph />
        </WinButton>
      </div>
      <div className="flex h-[454px] pt-px pb-px pl-px">
        <SettingsTree />
        <div className="flex flex-1 flex-col border-t border-l border-white pt-[3px] pr-1.5 pl-[5px]">
          <ServerBox />
          <div className="flex flex-1 flex-col pl-2.5">
            <Check label="Показывать окно выбора сообщений для приема" checked className="mt-2.5" />
            <Check
              label="Не показывать окно выбора сообщений при автоматическом приеме"
              checked
              className="mt-[9px] pl-[22px]"
            />
            <div className="mt-[11px] mr-3 -ml-1">
              <Rule />
            </div>
            <Check label="Создавать уведомления о доставке сообщения" checked className="mt-[13px]" />
            <button type="button" className={clsx(raised, 'mt-auto mr-1 mb-1.5 h-[25px] w-[155px] self-end')}>
              Проверить соединение
            </button>
          </div>
        </div>
      </div>
      <div className="flex h-[33px] items-center border-t border-[#808080] pr-1.5 pl-[3px] shadow-[inset_0_1px_0_#fff]">
        <button type="button" className={clsx(raised, 'mr-auto h-[25px] w-[180px]')}>
          Значения по умолчанию
        </button>
        <button type="button" className="mr-1.5 border border-black">
          <span className={clsx(raised, 'flex h-[23px] w-[73px] items-center justify-center')}>OK</span>
        </button>
        <button type="button" className={clsx(raised, 'h-[25px] w-[75px]')}>
          Отмена
        </button>
      </div>
    </div>
  );
}

/* ---------- taskbar ---------- */

const quick = [IeIcon, DesktopIcon, FloppyIcon, CubeIcon, WinampIcon, AppIcon, NotepadIcon, DiscIcon, FirefoxIcon];

const tasks = [
  { icon: TotalIcon, text: 'Total Comman...' },
  { icon: EclipseIcon, text: 'Java EE - ORE...' },
  { icon: IbIcon, text: 'orem - IBExpert' },
  { icon: FirefoxIcon, text: 'Визуальные з...' },
  { icon: NotepadIcon, text: '*Z:\\СамГЭС\\...' },
  { icon: DosIcon, text: 'DOSBox Statu...' },
  { icon: DosIcon, text: 'DOSBox 0.73,...' },
  { icon: ChromeIcon, text: 'APM_2.JPG - ...' },
  { icon: WinampIcon, text: '773. Skid Row...' },
  { icon: AppIcon, text: 'АРМ Участн...', active: true },
  { icon: NoteIcon, text: '[202111726@...' },
  { icon: PencilsIcon, text: 'APM_2.JPG - ...' },
];

const tray = [
  QipIcon,
  BatIcon,
  WinampIcon,
  SpeakerIcon,
  SpiderIcon,
  DriveIcon,
  NetworkIcon,
  EyeIcon,
  SafeIcon,
  VolumeIcon,
  WinampIcon,
];

function Taskbar() {
  return (
    <div className="flex h-[30px] items-center border-t border-[#d4d0c8] bg-[#d4d0c8] px-0.5 font-['DejaVu_Sans_Condensed','Noto_Sans',sans-serif] shadow-[inset_0_1px_0_#fff]">
      <button type="button" className={clsx(raised, 'flex h-[22px] w-[51px] items-center gap-px pl-px font-bold')}>
        <StartIcon />
        Пуск
      </button>
      <div className="flex w-[232px] gap-[7px] pl-[9px]">
        {quick.map((Ico, i) => (
          <button key={i} type="button" aria-label={`Быстрый запуск ${i + 1}`}>
            <Ico />
          </button>
        ))}
      </div>
      <div className="flex min-w-0 flex-1 gap-[3px]">
        {tasks.map(({ icon: Ico, text, active }, i) => (
          <button
            key={i}
            type="button"
            className={clsx(
              'flex h-[22px] min-w-0 flex-1 items-center gap-1 overflow-hidden pl-[3px] whitespace-nowrap',
              active ? [sunken, dither, 'font-bold'] : raised
            )}
          >
            <Ico />
            {text}
          </button>
        ))}
      </div>
      <span className="ml-[9px] flex h-4 w-4 items-center justify-center bg-[#0a246a] text-white">RU</span>
      <span className="mx-1 h-[26px] w-0.5 border-r border-l border-r-white border-l-[#808080]" />
      <div className="flex h-[26px] items-center gap-0.5 border border-t-[#808080] border-r-white border-b-white border-l-[#808080] pr-1.5 pl-[3px]">
        {tray.map((Ico, i) => (
          <Ico key={i} />
        ))}
        <time className="ml-1.5">14:32</time>
      </div>
    </div>
  );
}

export default function App() {
  return (
    <div className="flex h-screen flex-col overflow-hidden bg-[#d4d0c8] font-['Liberation_Sans',Arial,sans-serif] text-[11px] leading-[13px] text-black">
      <main className="relative flex min-h-0 flex-1 flex-col">
        <TitleBar />
        <MenuBar />
        <MainToolbar />
        <FilterBar />
        <FormToolbar />
        <FormsGrid />
        <Details />
        <LogPanel />
        <StatusBar />
        <div className="absolute inset-0 flex items-center justify-center pb-px">
          <SettingsDialog />
        </div>
      </main>
      <Taskbar />
    </div>
  );
}
